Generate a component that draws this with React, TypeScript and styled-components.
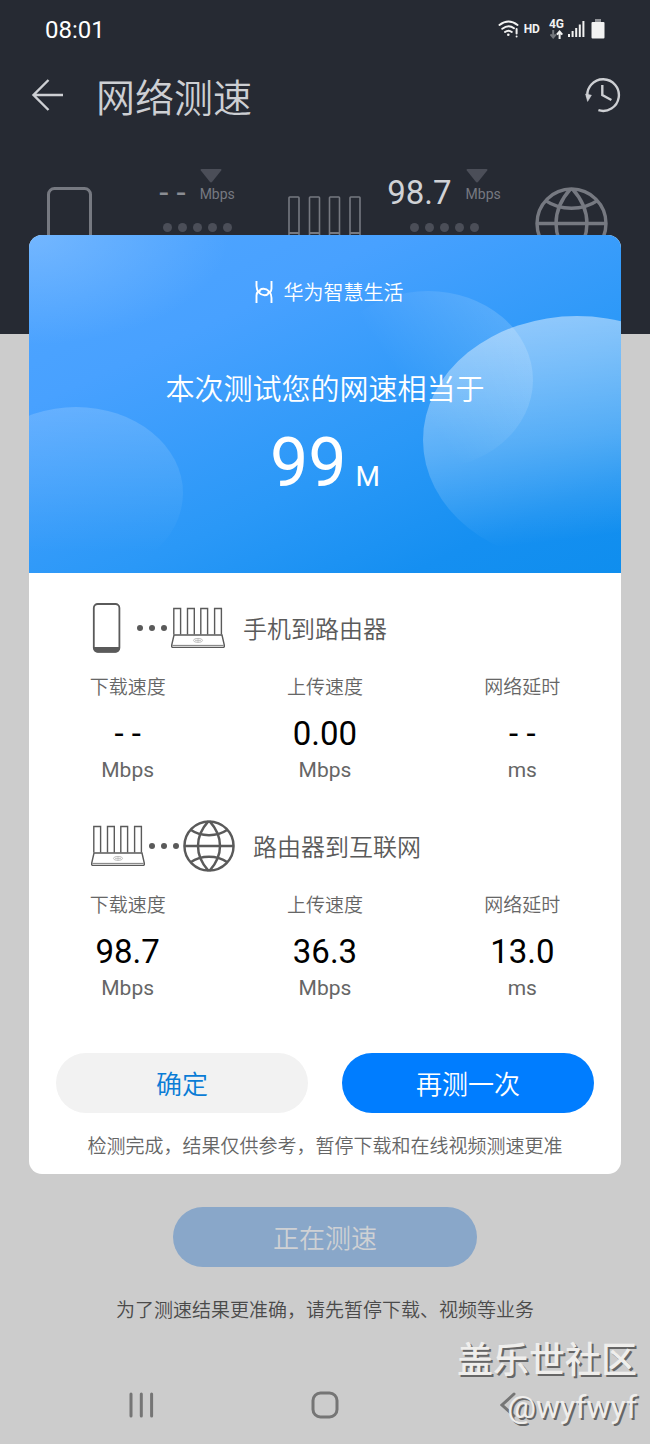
import React from "react";
import styled, { createGlobalStyle } from "styled-components";

const cjk = `"Noto Sans CJK SC", sans-serif`;

const GlobalStyle = createGlobalStyle`
  * { box-sizing: border-box; }
  body {
    margin: 0;
    background: #cccccc;
    font-family: Roboto, "Noto Sans CJK SC", sans-serif;
  }
  h1, h2, h3, p, dl, dt, dd { margin: 0; font-weight: 400; }
  button { font-family: inherit; border: 0; padding: 0; background: none; cursor: pointer; }
  svg { display: block; flex: none; }
`;

const Screen = styled.div`
  position: relative;
  display: grid;
  grid-template-columns: minmax(0, 1fr);
  min-height: 100vh;
`;

const Backdrop = styled.div`
  grid-area: 1 / 1;
  display: flex;
  flex-direction: column;
  background: #cccccc;
`;

const Overlay = styled.div`
  grid-area: 1 / 1;
  z-index: 1;
  padding: 235px 29px 270px;
  pointer-events: none;
`;

const DarkHeader = styled.header`
  height: 334px;
  background: #262a33;
`;

const StatusBar = styled.div`
  display: flex;
  align-items: center;
  justify-content: space-between;
  height: 60px;
  padding: 0 45px;
  color: #ffffff;
  font-size: 24px;
`;

const StatusIcons = styled.div`
  display: flex;
  align-items: center;
  padding-bottom: 2px;
  color: #f2f2f2;
`;

const HdLabel = styled.span`
  margin: 0 9px 0 5px;
  font-size: 12px;
  font-weight: 700;
  line-height: 16px;
`;

const NetworkType = styled.span`
  display: flex;
  flex-direction: column;
  align-items: center;
  margin-right: 4px;
  font-size: 12px;
  font-weight: 700;
  line-height: 11px;
`;

const TitleBar = styled.div`
  display: flex;
  align-items: center;
  height: 70px;
  padding: 0 29px 0 31px;
  color: #cdcfd3;
`;

const PageTitle = styled.h1`
  flex: 1;
  margin-left: 32px;
  font-family: ${cjk};
  font-size: 39px;
  font-weight: 350;
  line-height: 48px;
`;

const IconButton = styled.button`
  display: flex;
  align-items: center;
  justify-content: center;
  color: inherit;
`;

const Route = styled.div`
  display: grid;
  grid-template-columns: 59px 182fr 73px 166fr 81px;
  padding: 39px 42px 0 47px;
  color: #767981;
`;

const RouteNode = styled.div<{ $top: number; $end?: boolean }>`
  display: flex;
  justify-content: ${(p) => (p.$end ? "flex-end" : "flex-start")};
  padding-top: ${(p) => p.$top}px;
`;

const RouteLink = styled.div`
  display: flex;
  flex-direction: column;
  align-items: center;
  gap: 18px;
`;

const Speed = styled.div<{ $idle?: boolean }>`
  display: flex;
  align-items: flex-end;
  gap: 14px;
  height: 36px;
  color: ${(p) => (p.$idle ? "#8b8d93" : "#d0d2d6")};
  font-size: 33px;
  line-height: 24px;
`;

const SpeedUnit = styled.span`
  display: flex;
  flex-direction: column;
  align-self: flex-start;
  gap: 2px;
  color: #767981;
  font-size: 14px;
  line-height: 18px;
`;

const Dots = styled.span<{ $size: number; $gap: number }>`
  display: flex;
  align-items: center;
  gap: ${(p) => p.$gap}px;

  i {
    width: ${(p) => p.$size}px;
    height: ${(p) => p.$size}px;
    border-radius: 50%;
    background: currentColor;
  }
`;

const RouteDots = styled(Dots)`
  color: #4b4e58;
`;

const Spacer = styled.div`
  flex: 1;
`;

const Pending = styled.div`
  display: flex;
  flex-direction: column;
  align-items: center;
  gap: 29px;
  padding: 0 29px 44px;
`;

const Pill = styled.button<{ $bg: string; $fg: string }>`
  flex: 1;
  height: 60px;
  border-radius: 30px;
  background: ${(p) => p.$bg};
  color: ${(p) => p.$fg};
  font-family: ${cjk};
  font-size: 26px;
  font-weight: 350;
  line-height: 36px;
`;

const PendingPill = styled(Pill)`
  flex: none;
  width: 304px;
  max-width: 100%;
`;

const Hint = styled.p<{ $color: string }>`
  color: ${(p) => p.$color};
  font-family: ${cjk};
  font-size: 19px;
  font-weight: 350;
  line-height: 26px;
  text-align: center;
`;

const NavBar = styled.nav`
  display: grid;
  grid-template-columns: repeat(3, 1fr);
  height: 78px;
  padding: 0 50px;
  color: #757575;
`;

const Dialog = styled.section`
  overflow: hidden;
  border-radius: 13px;
  background: #ffffff;
  pointer-events: auto;
`;

const Hero = styled.div`
  position: relative;
  display: flex;
  flex-direction: column;
  align-items: center;
  padding: 42px 0 70px;
  color: #ffffff;
  background:
    radial-gradient(ellipse 200px 110px at 0 0, rgba(150, 200, 255, 0.5), rgba(150, 200, 255, 0)),
    linear-gradient(155deg, #50a5ff 0%, #48a1ff 28%, #2a98f7 62%, #158ff1 84%, #0f8eee 100%);
`;

const HeroArt = styled.svg`
  position: absolute;
  inset: 0;
  width: 100%;
  height: 100%;
`;

const Brand = styled.div`
  position: relative;
  display: flex;
  align-items: center;
  gap: 11px;
  padding-left: 8px;
  font-family: ${cjk};
  font-size: 20px;
  font-weight: 350;
  line-height: 30px;
`;

const HeroTitle = styled.h2`
  position: relative;
  margin-top: 60px;
  font-family: ${cjk};
  font-size: 29px;
  font-weight: 350;
  line-height: 40px;
`;

const HeroValue = styled.p`
  position: relative;
  display: flex;
  align-items: baseline;
  gap: 9px;
  height: 80px;
  margin-top: 16px;
  font-size: 68px;
  line-height: 80px;

  small {
    font-size: 28px;
    line-height: 32px;
  }
`;

const Results = styled.div`
  display: flex;
  flex-direction: column;
  gap: 38px;
  padding-top: 30px;
`;

const SectionHead = styled.div`
  display: flex;
  align-items: center;
  height: 50px;
  padding-left: 62px;
  color: #5a5a5a;
`;

const SectionDots = styled(Dots)`
  margin: 0 4px;
`;

const SectionTitle = styled.h3`
  margin-left: 18px;
  font-family: ${cjk};
  font-size: 24px;
  font-weight: 350;
  line-height: 34px;
`;

const Stats = styled.dl`
  display: grid;
  grid-template-columns: repeat(3, 1fr);
  margin-top: 20px;
  text-align: center;
`;

const StatLabel = styled.dt`
  color: #666666;
  font-family: ${cjk};
  font-size: 19px;
  font-weight: 350;
  line-height: 26px;
`;

const StatValue = styled.dd`
  margin-top: 15px;
  color: #000000;
  font-size: 33px;
  line-height: 40px;
`;

const StatUnit = styled.dd`
  margin-top: 3px;
  color: #666666;
  font-size: 21px;
  line-height: 26px;
`;

const Actions = styled.div`
  display: flex;
  gap: 34px;
  padding: 52px 27px 19px;
`;

const DialogNote = styled.div`
  padding-bottom: 16px;
`;

const Watermark = styled.div`
  position: absolute;
  z-index: 2;
  right: 13px;
  bottom: 12px;
  color: #efeeec;
  font-family: ${cjk};
  font-weight: 500;
  font-size: 36px;
  line-height: 50px;
  text-align: right;
  text-shadow: 2px 2px 0 #666666;
  pointer-events: none;

  span {
    display: block;
    font-family: Roboto, sans-serif;
    font-size: 32px;
    font-weight: 400;
  }
`;

const WifiIcon = () => (
  <svg width="21" height="18" viewBox="0 0 21 18" fill="none" stroke="currentColor" strokeWidth="2" strokeLinecap="round">
    <path d="M1.5 5Q10.5-2 19.5 5" />
    <path d="M4.3 8.8Q10.5 4 16 8.2" />
    <path d="M7 12Q10.5 9.4 13.8 12" />
    <circle cx="10.3" cy="14.8" r="1.3" fill="currentColor" stroke="none" />
    <path d="M18.6 9V13.6M18.6 16.4v.1" />
  </svg>
);

const DataArrows = () => (
  <svg width="13" height="9" viewBox="0 0 13 9" fill="none" strokeWidth="2">
    <path d="M3.2 0V7M.5 4.4L3.2 7.4L5.9 4.4" stroke="#75787e" />
    <path d="M9.6 9V2M6.9 4.6L9.6 1.6L12.3 4.6" stroke="currentColor" />
  </svg>
);

const SignalIcon = () => (
  <svg width="17" height="18" viewBox="0 0 17 18" fill="currentColor">
    <rect x="0" y="14" width="2" height="3" />
    <rect x="3.6" y="11" width="2" height="6" />
    <rect x="7.2" y="8" width="2" height="9" />
    <rect x="10.8" y="4.5" width="2" height="12.5" />
    <rect x="14.4" y="1" width="2" height="16" />
  </svg>
);

const BatteryIcon = () => (
  <svg width="20" height="20" viewBox="-6 0 20 20">
    <rect x="4" y="0" width="6" height="3" fill="#8f9196" />
    <rect x="0.5" y="3" width="13" height="16.5" rx="1" fill="#f2f2f2" />
  </svg>
);

const BackArrow = () => (
  <svg width="33" height="32" viewBox="0 0 33 32" fill="none" stroke="currentColor" strokeWidth="2.4">
    <path d="M17.5 1L2.5 16L17.5 31M2.5 16H32" />
  </svg>
);

const HistoryIcon = () => (
  <svg width="36" height="36" viewBox="0 0 36 36" fill="none" stroke="currentColor" strokeWidth="2.4">
    <path d="M2.4 20A15.8 15.8 0 1 1 13.4 33.2" />
    <path d="M0.6 17L6.4 18.2L2.6 24.4Z" fill="currentColor" stroke="currentColor" strokeWidth="0.6" />
    <path d="M17.3 8V18L26.4 23" />
  </svg>
);

const Globe = ({ size, stroke }: { size: number; stroke: number }) => (
  <svg width={size} height={size} viewBox="0 0 72 72" fill="none" stroke="currentColor" strokeWidth={stroke}>
    <circle cx="36" cy="36" r="34" />
    <path d="M2 36H70" />
    <path d="M35 2C16 23 16 49 35 70M37 2C56 23 56 49 37 70" />
    <path d="M10.5 13.5C25 23.5 47 23.5 61.5 13.5M10.5 58.5C25 48.5 47 48.5 61.5 58.5" />
  </svg>
);

const BigPhone = () => (
  <svg width="45" height="88" viewBox="0 0 45 88" fill="none" stroke="currentColor" strokeWidth="3">
    <rect x="1.5" y="1.5" width="42" height="84" rx="6" />
  </svg>
);

const Phone = () => (
  <svg width="42" height="50" viewBox="0 0 42 50">
    <rect x="2.8" y="1" width="25.6" height="47.8" rx="4" fill="none" stroke="currentColor" strokeWidth="1.8" />
    <path d="M2.8 44H28.4V45Q28.4 49.5 24.4 49.5H6.8Q2.8 49.5 2.8 45Z" fill="currentColor" />
  </svg>
);

const Router = () => (
  <svg width="54" height="42" viewBox="0 0 54 42" fill="none" stroke="currentColor" strokeWidth="1.4">
    <path d="M2.8 27.5V1.5H9.6V27.5M16.5 27.5V1.5H23.3V27.5M29.8 27.5V1.5H36.6V27.5M43.6 27.5V1.5H50.4V27.5" />
    <path d="M3 28H51L53.4 38.6Q53.6 40.4 51.8 40.4H2.2Q.4 40.4.6 38.6Z" />
    <path d="M1.4 38.4H52.6" strokeWidth="0.8" />
    <ellipse cx="27" cy="33.4" rx="4.5" ry="2" stroke="#b5b5b5" strokeWidth="0.9" />
    <path d="M24 33.4H30M27 31.6V35.2" stroke="#b5b5b5" strokeWidth="0.8" />
  </svg>
);

const RouteRouter = () => (
  <svg width="73" height="60" viewBox="0 0 73 60" fill="none" stroke="currentColor" strokeWidth="1.6">
    <path d="M1 40V1.8Q1 1 1.8 1H10.2Q11 1 11 1.8V40M21.5 40V1.8Q21.5 1 22.3 1H30.7Q31.5 1 31.5 1.8V40M41.5 40V1.8Q41.5 1 42.3 1H50.7Q51.5 1 51.5 1.8V40M62 40V1.8Q62 1 62.8 1H71.2Q72 1 72 1.8V40" />
    <path d="M1 37H11M21.5 37H31.5M41.5 37H51.5M62 37H72" strokeWidth="2" />
  </svg>
);

const Triangle = () => (
  <svg width="22" height="14" viewBox="0 0 22 14" fill="#4b4e58">
    <path d="M1.5 0H20.5Q22 0 21.2 1.4L12.2 12.8Q11 14 9.8 12.8L.8 1.4Q0 0 1.5 0Z" />
  </svg>
);

const BrandMark = () => (
  <svg width="18" height="22" viewBox="0 0 18 22" fill="none" stroke="currentColor" strokeWidth="1.9">
    <path d="M1.5 0V5C1.5 10.5 5.5 14.2 9.5 14.2C12.6 14.2 13.8 12.8 13.2 11" />
    <path d="M16.5 22V17C16.5 11.5 12.5 7.8 8.5 7.8C5.4 7.8 4.2 9.2 4.8 11" />
    <path d="M16.5 0V7.5Q16.5 10 14.6 12.4" />
    <path d="M1.5 22V14.5Q1.5 12 3.4 9.6" />
  </svg>
);

const RecentsIcon = () => (
  <svg width="25" height="26" viewBox="0 0 25 26" stroke="currentColor" strokeWidth="3" strokeLinecap="round">
    <path d="M2 2V24M12.3 2V24M22.6 2V24" />
  </svg>
);

const HomeIcon = () => (
  <svg width="28" height="28" viewBox="0 0 28 28" fill="none" stroke="currentColor" strokeWidth="3">
    <rect x="2" y="2" width="24" height="24" rx="7.5" />
  </svg>
);

const BackIcon = () => (
  <svg width="16" height="26" viewBox="0 0 16 26" fill="none" stroke="currentColor" strokeWidth="3" strokeLinecap="round">
    <path d="M14 2L2 13L14 24" />
  </svg>
);

const DotRow = ({ count }: { count: number }) => (
  <>
    {Array.from({ length: count }, (_, i) => (
      <i key={i} />
    ))}
  </>
);

type Stat = { label: string; value: string; unit: string };

const phoneToRouter: Stat[] = [
  { label: "下载速度", value: "- -", unit: "Mbps" },
  { label: "上传速度", value: "0.00", unit: "Mbps" },
  { label: "网络延时", value: "- -", unit: "ms" },
];

const routerToInternet: Stat[] = [
  { label: "下载速度", value: "98.7", unit: "Mbps" },
  { label: "上传速度", value: "36.3", unit: "Mbps" },
  { label: "网络延时", value: "13.0", unit: "ms" },
];

const ResultSection = ({
  from,
  to,
  title,
  stats,
}: {
  from: React.ReactNode;
  to: React.ReactNode;
  title: string;
  stats: Stat[];
}) => (
  <section>
    <SectionHead>
      {from}
      <SectionDots $size={6} $gap={6}>
        <DotRow count={3} />
      </SectionDots>
      {to}
      <SectionTitle>{title}</SectionTitle>
    </SectionHead>
    <Stats>
      {stats.map((s) => (
        <div key={s.label}>
          <StatLabel>{s.label}</StatLabel>
          <StatValue>{s.value}</StatValue>
          <StatUnit>{s.unit}</StatUnit>
        </div>
      ))}
    </Stats>
  </section>
);

const LinkSpeed = ({ value, idle }: { value: string; idle?: boolean }) => (
  <RouteLink>
    <Speed $idle={idle}>
      <span>{value}</span>
      <SpeedUnit>
        <Triangle />
        Mbps
      </SpeedUnit>
    </Speed>
    <RouteDots $size={9} $gap={6}>
      <DotRow count={5} />
    </RouteDots>
  </RouteLink>
);

export default function App() {
  return (
    <Screen>
      <GlobalStyle />
      <Backdrop>
        <DarkHeader>
          <StatusBar>
            <span>08:01</span>
            <StatusIcons>
              <WifiIcon />
              <HdLabel>HD</HdLabel>
              <NetworkType>
                4G
                <DataArrows />
              </NetworkType>
              <SignalIcon />
              <BatteryIcon />
            </StatusIcons>
          </StatusBar>
          <TitleBar>
            <IconButton aria-label="返回">
              <BackArrow />
            </IconButton>
            <PageTitle>网络测速</PageTitle>
            <IconButton aria-label="历史记录">
              <HistoryIcon />
            </IconButton>
          </TitleBar>
          <Route>
            <RouteNode $top={18}>
              <BigPhone />
            </RouteNode>
            <LinkSpeed value="- -" idle />
            <RouteNode $top={27}>
              <RouteRouter />
            </RouteNode>
            <LinkSpeed value="98.7" />
            <RouteNode $top={18} $end>
              <Globe size={73} stroke={3.4} />
            </RouteNode>
          </Route>
        </DarkHeader>
        <Spacer />
        <Pending>
          <PendingPill $bg="#89a7c9" $fg="#cfd1d4">
            正在测速
          </PendingPill>
          <Hint $color="#4a4a4a">为了测速结果更准确，请先暂停下载、视频等业务</Hint>
        </Pending>
        <NavBar>
          <IconButton aria-label="最近任务">
            <RecentsIcon />
          </IconButton>
          <IconButton aria-label="主屏幕">
            <HomeIcon />
          </IconButton>
          <IconButton aria-label="后退">
            <BackIcon />
          </IconButton>
        </NavBar>
      </Backdrop>

      <Overlay>
        <Dialog role="dialog" aria-labelledby="result-title">
          <Hero>
            <HeroArt viewBox="0 0 592 338" preserveAspectRatio="none" aria-hidden="true">
              <defs>
                <linearGradient id="bubbleRight" x1="0.35" y1="0" x2="0.5" y2="1">
                  <stop offset="0" stopColor="#fff" stopOpacity="0.46" />
                  <stop offset="0.5" stopColor="#fff" stopOpacity="0.24" />
                  <stop offset="0.9" stopColor="#fff" stopOpacity="0" />
                </linearGradient>
                <linearGradient id="bubbleMiddle" x1="1" y1="0.3" x2="0.3" y2="0.7">
                  <stop offset="0" stopColor="#fff" stopOpacity="0.17" />
                  <stop offset="0.8" stopColor="#fff" stopOpacity="0" />
                </linearGradient>
                <linearGradient id="bubbleLeft" x1="0" y1="0" x2="0" y2="1">
                  <stop offset="0" stopColor="#fff" stopOpacity="0.17" />
                  <stop offset="0.85" stopColor="#fff" stopOpacity="0" />
                </linearGradient>
              </defs>
              <ellipse cx="548" cy="205" rx="154" ry="124" fill="url(#bubbleRight)" />
              <ellipse cx="399" cy="145" rx="105" ry="89" fill="url(#bubbleMiddle)" />
              <ellipse cx="47" cy="258" rx="107" ry="86" fill="url(#bubbleLeft)" />
            </HeroArt>
            <Brand>
              <BrandMark />
              华为智慧生活
            </Brand>
            <HeroTitle id="result-title">本次测试您的网速相当于</HeroTitle>
            <HeroValue>
              99<small>M</small>
            </HeroValue>
          </Hero>
          <Results>
            <ResultSection
              from={<Phone />}
              to={<Router />}
              title="手机到路由器"
              stats={phoneToRouter}
            />
            <ResultSection
              from={<Router />}
              to={<Globe size={52} stroke={3.4} />}
              title="路由器到互联网"
              stats={routerToInternet}
            />
          </Results>
          <Actions>
            <Pill $bg="#f2f2f2" $fg="#0a7cd6">
              确定
            </Pill>
            <Pill $bg="#007dff" $fg="#ffffff">
              再测一次
            </Pill>
          </Actions>
          <DialogNote>
            <Hint $color="#666666">检测完成，结果仅供参考，暂停下载和在线视频测速更准</Hint>
          </DialogNote>
        </Dialog>
      </Overlay>

      <Watermark>
        盖乐世社区
        <span>@wyfwyf</span>
      </Watermark>
    </Screen>
  );
}
